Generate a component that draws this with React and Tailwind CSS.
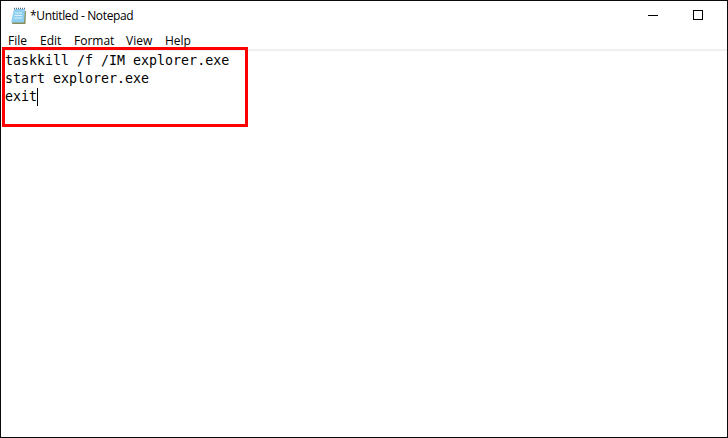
export default function App() {
  return (
    <div className="relative flex h-[438px] w-[728px] flex-col overflow-hidden border border-[#0a0a0a] bg-white" style={{ fontFamily: '"Open Sans", sans-serif' }}>
      <div className="flex h-[30px] shrink-0 items-center pl-[9px] text-black">
        <svg width="17" height="20" viewBox="0 0 17 20" className="mr-[3px]">
          <path d="M5 5 H16 L15.5 18 H2 Z" fill="#8a8f5e" />
          <path d="M4 3 H15 L14 16.5 H1 Z" fill="#8fd0f0" />
          <path d="M5 7 H12 M4.6 9.5 H12 M4.3 12 H12" stroke="#d8f0fb" strokeWidth="1" />
          <path d="M4 2.5 H15" stroke="#55708a" strokeWidth="1.5" strokeDasharray="1 1" />
        </svg>
        <span className="text-[12px] leading-none tracking-[-0.03em]">*Untitled - Notepad</span>
      </div>
      <div className="flex h-[18px] shrink-0 items-center pl-[7px] pt-[2px] text-[12px] leading-none text-black">
        <span className="w-[32px]">File</span>
        <span className="w-[34px]">Edit</span>
        <span className="w-[52px]">Format</span>
        <span className="w-[39px]">View</span>
        <span>Help</span>
      </div>
      <div className="h-[2px] shrink-0 bg-[#f0f0f0]" />
      <div className="pl-[4px] pt-[1px] text-[13.3px] leading-[18px] text-black" style={{ fontFamily: '"DejaVu Sans Mono", monospace' }}>
        <div>taskkill /f /IM explorer.exe</div>
        <div>start explorer.exe</div>
        <div className="flex items-center">exit<span className="h-[18px] w-[1px] bg-black" /></div>
      </div>
      <div className="absolute left-[1px] top-[46px] h-[80px] w-[246px] border-[3px] border-[#ff0000]" />
      <div className="absolute right-[69px] top-[14px] h-[1px] w-[10px] bg-black" />
      <div className="absolute right-[24px] top-[9px] h-[10px] w-[10px] border border-black" />
    </div>
  );
}
